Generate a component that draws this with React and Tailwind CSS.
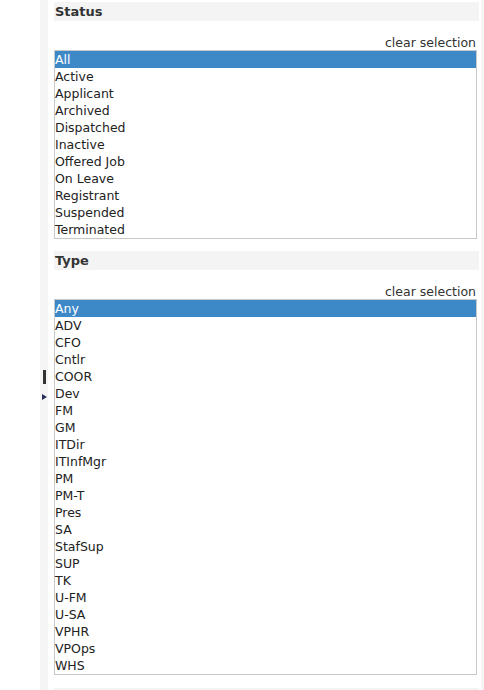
import React from "react";

const STATUSES = [
  "All",
  "Active",
  "Applicant",
  "Archived",
  "Dispatched",
  "Inactive",
  "Offered Job",
  "On Leave",
  "Registrant",
  "Suspended",
  "Terminated",
];

const TYPES = [
  "Any", "ADV", "CFO", "Cntlr", "COOR", "Dev", "FM", "GM", "ITDir", "ITInfMgr", "PM",
  "PM-T", "Pres", "SA", "StafSup", "SUP", "TK", "U-FM", "U-SA", "VPHR", "VPOps", "WHS",
];

function Section({ title, items, className = "" }) {
  return (
    <div className={className}>
      <div className="h-[19px] bg-[#f4f4f4] px-[1px] text-[13px] font-bold leading-[19px] text-[#333]">
        {title}
      </div>
      <div className="mt-[13px] h-[16px] pr-[3px] text-right text-[12.5px] leading-[17px] text-[#333]">
        clear selection
      </div>
      <ul className="mr-[2px] border border-[#c8c8c8]">
        {items.map((item, i) => (
          <li
            key={item}
            className={`h-[17px] text-[12.5px] leading-[17px] ${
              i === 0 ? "bg-[#3d89c8] text-white" : "text-[#222]"
            }`}
          >
            {item}
          </li>
        ))}
      </ul>
    </div>
  );
}

export default function App() {
  return (
    <div className="flex h-[690px] w-[484px] overflow-hidden bg-white font-['DejaVu_Sans',Verdana,sans-serif]">
      <div className="w-[40px] shrink-0" />
      <div className="relative w-[8px] shrink-0 bg-[#f5f5f5]">
        <span className="absolute left-[3px] top-[370px] h-[14px] w-[3px] bg-[#333]" />
        <span className="absolute left-[2px] top-[394px] h-0 w-0 border-y-[3px] border-l-[5px] border-y-transparent border-l-[#2a2f55]" />
      </div>
      <div className="w-[6px] shrink-0" />
      <div className="w-[425px] shrink-0 pt-[2px]">
        <Section title="Status" items={STATUSES} />
        <Section title="Type" items={TYPES} className="mt-[12px]" />
        <div className="mt-[13px] h-[20px] bg-[#f4f4f4]" />
      </div>
      <div className="w-[2px] shrink-0" />
      <div className="w-[3px] shrink-0 bg-[#f5f5f5]" />
    </div>
  );
}
